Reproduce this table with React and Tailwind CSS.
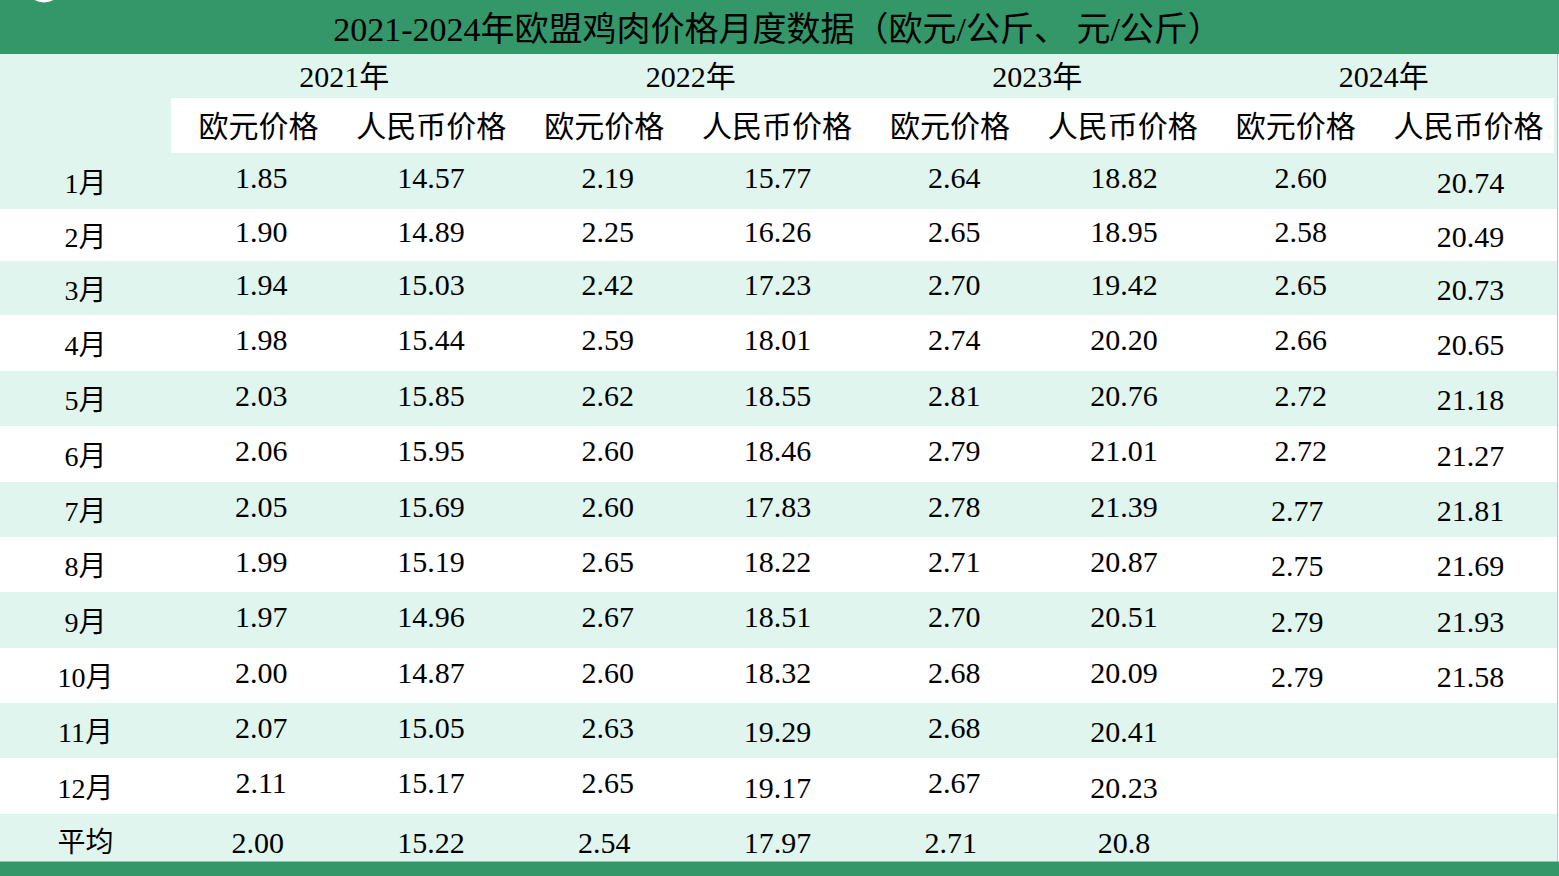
import React from 'react';

const rows = [
  { m: '1月', h: 'h-[56px]', v: ['1.85', '14.57', '2.19', '15.77', '2.64', '18.82', '2.60', '20.74'], low: [7] },
  { m: '2月', h: 'h-[52px]', v: ['1.90', '14.89', '2.25', '16.26', '2.65', '18.95', '2.58', '20.49'], low: [7] },
  { m: '3月', h: 'h-[54px]', v: ['1.94', '15.03', '2.42', '17.23', '2.70', '19.42', '2.65', '20.73'], low: [7] },
  { m: '4月', h: 'h-[56px]', v: ['1.98', '15.44', '2.59', '18.01', '2.74', '20.20', '2.66', '20.65'], low: [7] },
  { m: '5月', h: 'h-[55px]', v: ['2.03', '15.85', '2.62', '18.55', '2.81', '20.76', '2.72', '21.18'], low: [7] },
  { m: '6月', h: 'h-[56px]', v: ['2.06', '15.95', '2.60', '18.46', '2.79', '21.01', '2.72', '21.27'], low: [7] },
  { m: '7月', h: 'h-[55px]', v: ['2.05', '15.69', '2.60', '17.83', '2.78', '21.39', '2.77', '21.81'], low: [6, 7] },
  { m: '8月', h: 'h-[55px]', v: ['1.99', '15.19', '2.65', '18.22', '2.71', '20.87', '2.75', '21.69'], low: [6, 7] },
  { m: '9月', h: 'h-[56px]', v: ['1.97', '14.96', '2.67', '18.51', '2.70', '20.51', '2.79', '21.93'], low: [6, 7] },
  { m: '10月', h: 'h-[55px]', v: ['2.00', '14.87', '2.60', '18.32', '2.68', '20.09', '2.79', '21.58'], low: [6, 7] },
  { m: '11月', h: 'h-[55px]', v: ['2.07', '15.05', '2.63', '19.29', '2.68', '20.41', '', ''], low: [3, 5] },
  { m: '12月', h: 'h-[56px]', v: ['2.11', '15.17', '2.65', '19.17', '2.67', '20.23', '', ''], low: [3, 5] },
];

const avg = ['2.00', '15.22', '2.54', '17.97', '2.71', '20.8', '', ''];
const years = ['2021年', '2022年', '2023年', '2024年'];
const font = { fontFamily: '"Liberation Serif", "Noto Sans CJK SC", serif' };

const cellClass = (j, low) => {
  if (low) return 'pt-[3px]';
  // euro columns sit a little to the right of their headers
  return j % 2 === 0 ? 'pb-[6px] pl-[7px]' : 'pb-[6px]';
};

const App = () => {
  return (
    <div className="relative w-[1559px] h-[876px] overflow-hidden bg-white text-black" style={font}>
      {/* little white blob peeking in at the top-left */}
      <svg className="absolute left-[22px] top-[-20px]" width="46" height="24" viewBox="0 0 46 24">
        <ellipse cx="22" cy="8" rx="17" ry="14.5" fill="#ffffff" />
      </svg>

      {/* Title bar */}
      <div className="h-[54px] bg-[#33976a] flex items-center justify-center pt-[6px] pr-[4px] text-[34px] leading-none">
        2021-2024年欧盟鸡肉价格月度数据（欧元/公斤、 元/公斤）
      </div>

      <div className="w-[1558px] border-r border-[#b8c4bf] bg-[#dff5ee]">
        {/* Years row */}
        <div className="h-[44px] grid grid-cols-[171px_repeat(4,1fr)] text-[30px] leading-none">
          <div />
          {years.map((y) => (
            <div key={y} className="flex items-center justify-center pt-[1px]">{y}</div>
          ))}
        </div>

        {/* Sub header */}
        <div className="h-[55px] grid grid-cols-[171px_1fr]">
          <div />
          <div className="bg-white mr-[3px] grid grid-cols-8 text-[30px] leading-none" style={{ fontFamily: '"Noto Sans CJK SC", sans-serif' }}>
            {years.map((y) => (
              <React.Fragment key={y}>
                <div className="flex items-center justify-center pl-[2px] pb-[4px]">欧元价格</div>
                <div className="flex items-center justify-center pl-[2px] pb-[4px]">人民币价格</div>
              </React.Fragment>
            ))}
          </div>
        </div>

        {/* Data rows */}
        {rows.map((r, i) => (
          <div
            key={r.m}
            className={`${r.h} grid grid-cols-[171px_repeat(8,1fr)] text-[30px] leading-none ${i % 2 === 0 ? 'bg-[#dff5ee]' : 'bg-white'}`}
          >
            <div className="flex items-center justify-center pt-[5px] text-[28px]">{r.m}</div>
            {r.v.map((val, j) => (
              <div key={j} className={`flex items-center justify-center ${cellClass(j, r.low.includes(j))}`}>
                {val}
              </div>
            ))}
          </div>
        ))}

        {/* Average */}
        <div className="h-[47px] grid grid-cols-[171px_repeat(8,1fr)] text-[30px] leading-none">
          <div className="flex items-center justify-center pt-[10px] text-[28px]">平均</div>
          {avg.map((val, j) => (
            <div key={j} className="flex items-center justify-center pt-[10px]">{val}</div>
          ))}
        </div>
      </div>

      {/* bottom bar */}
      <div className="h-[15px] bg-[#33976a] border-t border-[#8fc7ad]" />
    </div>
  );
};

export default App;
